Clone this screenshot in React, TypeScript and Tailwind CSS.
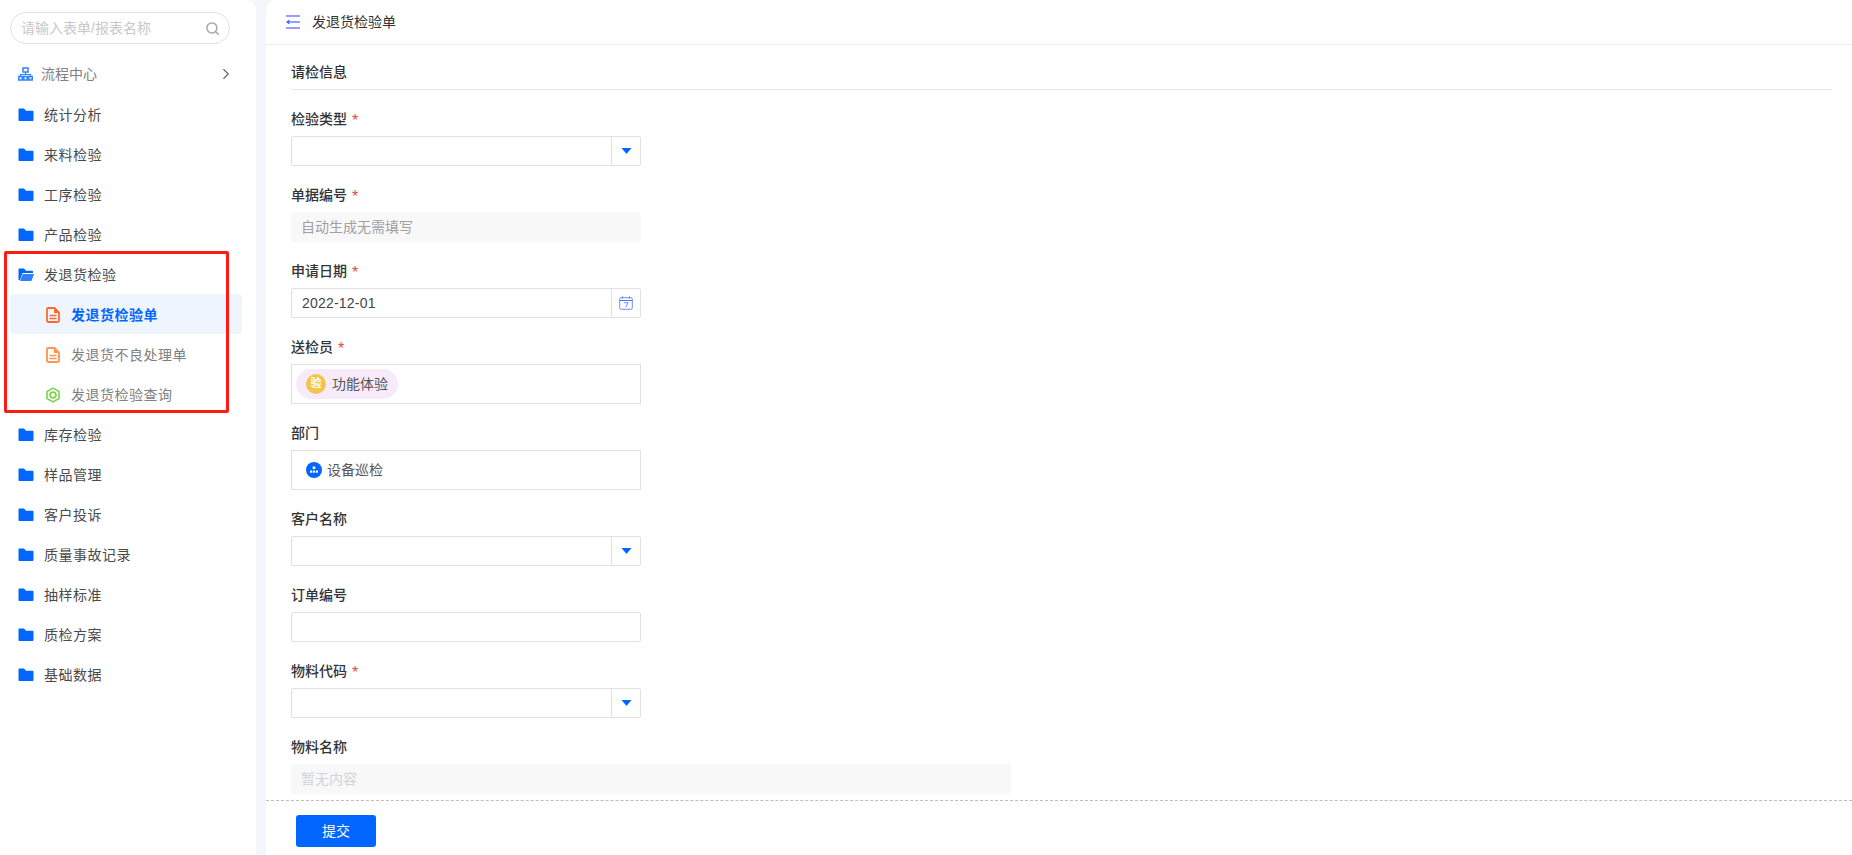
import React from 'react';
import { Search, ChevronRight } from 'lucide-react';

const font = "font-['Liberation_Sans','Noto_Sans_CJK_SC',sans-serif]";

const FolderIcon = ({ open }: { open?: boolean }) =>
  open ? (
    <svg width="16" height="14" viewBox="0 0 16 14" className="shrink-0">
      <path d="M0.500 1.500a1 1 0 0 1 1-1h4.500l2 2.200h6a1 1 0 0 1 1 1V5H4.500L2 12H1a0.500 0.500 0 0 1-0.500-0.500z" fill="#0066ff" />
      <path d="M4.800 6H16l-2.200 6.300a1 1 0 0 1-1 0.700H2z" fill="#2f80ff" />
    </svg>
  ) : (
    <svg width="16" height="14" viewBox="0 0 16 14" className="shrink-0">
      <path d="M0.500 1.500a1 1 0 0 1 1-1h4.500l2 2.200h6.500a1 1 0 0 1 1 1V12a1 1 0 0 1-1 1h-13a1 1 0 0 1-1-1z" fill="#0066ff" />
    </svg>
  );

const DocIcon = ({ color }: { color: string }) => (
  <svg width="14" height="16" viewBox="0 0 14 16" fill="none" className="shrink-0">
    <path d="M2 1h6.500L13 5.500V13.500a1.500 1.500 0 0 1-1.500 1.500h-9.500A1.500 1.500 0 0 1 1 13.500V2A1 1 0 0 1 2 1z" stroke={color} strokeWidth="1.800" />
    <path d="M8 1v5h5" fill={color} />
    <path d="M3.500 8.500h7M3.500 11.500h7" stroke={color} strokeWidth="1.500" />
  </svg>
);

const HexIcon = () => (
  <svg width="16" height="16" viewBox="0 0 16 16" fill="none" className="shrink-0">
    <path d="M8 1.100l6 3.400v7L8 14.900l-6-3.400v-7z" stroke="#7fd14f" strokeWidth="1.600" />
    <circle cx="8" cy="8" r="2.900" stroke="#7fd14f" strokeWidth="1.800" />
  </svg>
);

const FlowIcon = () => (
  <svg width="15" height="14" viewBox="0 0 15 14" fill="none" stroke="#2f80ff" strokeWidth="1.500" className="shrink-0">
    <rect x="5" y="1" width="5" height="4" />
    <path d="M7.500 5v3M2.500 9.500V7.500h10v2" strokeWidth="1.100" />
    <rect x="0.800" y="9.500" width="3.400" height="3.500" />
    <rect x="5.800" y="9.500" width="3.400" height="3.500" />
    <rect x="10.800" y="9.500" width="3.400" height="3.500" />
  </svg>
);

const Caret = () => (
  <svg width="11" height="6" viewBox="0 0 11 6" className="shrink-0">
    <path d="M0.500 0h10L5.500 6z" fill="#0066ff" />
  </svg>
);

const Label = ({ text, required }: { text: string; required?: boolean }) => (
  <div className="h-[18px] flex items-center text-sm font-medium text-[#333] leading-none mb-[8px]">
    {text}
    {required && <span className="ml-[5px] mt-[3px] text-[#e5484d] text-base leading-none">*</span>}
  </div>
);

const SelectBox = () => (
  <div className="w-[350px] h-[30px] flex border border-[#e0e0e0] rounded-[2px] bg-white">
    <div className="flex-1" />
    <div className="w-[29px] border-l border-[#e0e0e0] flex items-center justify-center">
      <Caret />
    </div>
  </div>
);

const ReadonlyBox = ({ text, wide }: { text: string; wide?: boolean }) => (
  <div className={`${wide ? 'w-[720px] text-[#d0d3da]' : 'w-[350px] text-[#a0a0a0]'} h-[30px] flex items-center px-[10px] text-sm bg-[#f8f8f8] rounded-[2px]`}>
    {text}
  </div>
);

const sections: { name: string }[] = [
  { name: '统计分析' },
  { name: '来料检验' },
  { name: '工序检验' },
  { name: '产品检验' },
];

const sectionsAfter = ['库存检验', '样品管理', '客户投诉', '质量事故记录', '抽样标准', '质检方案', '基础数据'];

const FolderRow = ({ name, open }: { name: string; open?: boolean }) => (
  <div className="h-10 flex items-center pl-[18px] gap-[10px] text-sm tracking-[0.5px] text-[#4a4a4a]">
    <FolderIcon open={open} />
    <span>{name}</span>
  </div>
);

export default function App() {
  return (
    <div className={`${font} relative w-full h-[855px] flex bg-[#f4f6fb] overflow-hidden`}>
      <aside className="w-[256px] shrink-0 bg-white rounded-tr-[10px] pt-3">
        <div className="mx-[10px] w-[220px] h-8 border border-[#e0e0e0] rounded-full flex items-center pl-[10px] pr-[9px] text-sm text-[#c8c8c8]">
          <span className="flex-1">请输入表单/报表名称</span>
          <Search size={15} strokeWidth={2.400} className="text-[#a8a8a8]" />
        </div>
        <div className="mt-[10px] mb-px h-10 flex items-center pl-[18px] pr-[24px] text-sm text-[#808080]">
          <FlowIcon />
          <span className="ml-[8px] flex-1">流程中心</span>
          <ChevronRight size={18} strokeWidth={1.500} className="text-[#666] -mr-[3px]" />
        </div>
        {sections.map((s) => (
          <FolderRow key={s.name} name={s.name} />
        ))}
        <FolderRow name="发退货检验" open />
        <div className="ml-[10px] -mt-px mb-px pt-px w-[232px] h-10 rounded-[4px] bg-[#eff5ff] flex items-center pl-[36px] gap-[11px] text-sm font-bold tracking-[0.5px] text-[#0066ff]">
          <DocIcon color="#ff6a2a" />
          <span>发退货检验单</span>
        </div>
        <div className="ml-[10px] h-10 flex items-center pl-[36px] gap-[11px] text-sm tracking-[0.5px] text-[#808080]">
          <DocIcon color="#ff9350" />
          <span>发退货不良处理单</span>
        </div>
        <div className="ml-[10px] h-10 flex items-center pl-[35px] gap-[10px] text-sm tracking-[0.5px] text-[#808080]">
          <HexIcon />
          <span>发退货检验查询</span>
        </div>
        {sectionsAfter.map((s) => (
          <FolderRow key={s} name={s} />
        ))}
      </aside>

      <main className="ml-[10px] flex-1 min-w-0 bg-white rounded-tl-[10px] flex flex-col overflow-hidden">
        <header className="h-[45px] shrink-0 border-b border-[#ececec] flex items-center pl-[20px] gap-[12px] text-sm text-[#333]">
          <svg width="14" height="14" viewBox="0 0 14 14" className="shrink-0">
            <path d="M0 1h14M4 7h10M0 13h14" stroke="#9a9cff" strokeWidth="2" />
            <path d="M0 7L3.500 4.500v5z" fill="#1a6cff" />
          </svg>
          <span>发退货检验单</span>
        </header>
        <div className="flex-1 min-h-0 overflow-hidden pl-[25px] pr-[20px]">
          <div className="h-[45px] flex items-end pb-[10px] border-b border-[#e8e8e8] text-sm font-medium text-[#333] leading-none">
            请检信息
          </div>
          <div className="pt-[20px] flex flex-col gap-[20px]">
            <div><Label text="检验类型" required /><SelectBox /></div>
            <div><Label text="单据编号" required /><ReadonlyBox text="自动生成无需填写" /></div>
            <div>
              <Label text="申请日期" required />
              <div className="w-[350px] h-[30px] flex border border-[#e0e0e0] rounded-[2px]">
                <div className="flex-1 flex items-center pl-[10px] text-sm tracking-[0.2px] text-[#444]">2022-12-01</div>
                <div className="w-[29px] border-l border-[#e0e0e0] flex items-center justify-center">
                  <svg width="14" height="14" viewBox="0 0 14 14" fill="none">
                    <rect x="0.700" y="1.700" width="12.600" height="11.600" rx="1.500" stroke="#6f8cff" />
                    <path d="M0.700 4.500h12.600M3.500 0.500v2M10.500 0.500v2" stroke="#2f80ff" />
                    <path d="M5 6.700h4L6.800 11.500" stroke="#6f8cff" />
                  </svg>
                </div>
              </div>
            </div>
            <div>
              <Label text="送检员" required />
              <div className="w-[350px] h-10 flex items-center px-[4px] border border-[#e0e0e0]">
                <div className="h-[30px] flex items-center pl-[10px] pr-[10px] rounded-full bg-[#f6eafb] gap-[6px] text-sm text-[#555]">
                  <span className="w-5 h-5 rounded-full bg-[#f5c24c] text-white text-[11px] font-bold flex items-center justify-center">验</span>
                  功能体验
                </div>
              </div>
            </div>
            <div>
              <Label text="部门" />
              <div className="w-[350px] h-10 flex items-center pl-[14px] gap-[5px] border border-[#e0e0e0] text-sm text-[#555]">
                <span className="w-4 h-4 rounded-full bg-[#0066ff] flex items-center justify-center">
                  <svg width="10" height="10" viewBox="0 0 10 10" fill="white">
                    <rect x="3.700" y="1.500" width="2.600" height="2.500" />
                    <rect x="1" y="5.500" width="2.200" height="2.200" />
                    <rect x="3.900" y="5.500" width="2.200" height="2.200" />
                    <rect x="6.800" y="5.500" width="2.200" height="2.200" />
                  </svg>
                </span>
                设备巡检
              </div>
            </div>
            <div><Label text="客户名称" /><SelectBox /></div>
            <div><Label text="订单编号" /><div className="w-[350px] h-[30px] border border-[#e0e0e0] rounded-[2px]" /></div>
            <div><Label text="物料代码" required /><SelectBox /></div>
            <div><Label text="物料名称" /><ReadonlyBox text="暂无内容" wide /></div>
          </div>
        </div>
        <footer className="h-[55px] shrink-0 border-t border-dashed border-[#bdbdbd] pl-[30px] pt-[14px]">
          <button className="w-20 h-8 rounded-[3px] bg-[#0066ff] text-white text-sm">提交</button>
        </footer>
      </main>

      <div className="absolute left-[4px] top-[251px] w-[225px] h-[162px] border-[3px] border-[#ff1a12] rounded-[2px] pointer-events-none" />
    </div>
  );
}
